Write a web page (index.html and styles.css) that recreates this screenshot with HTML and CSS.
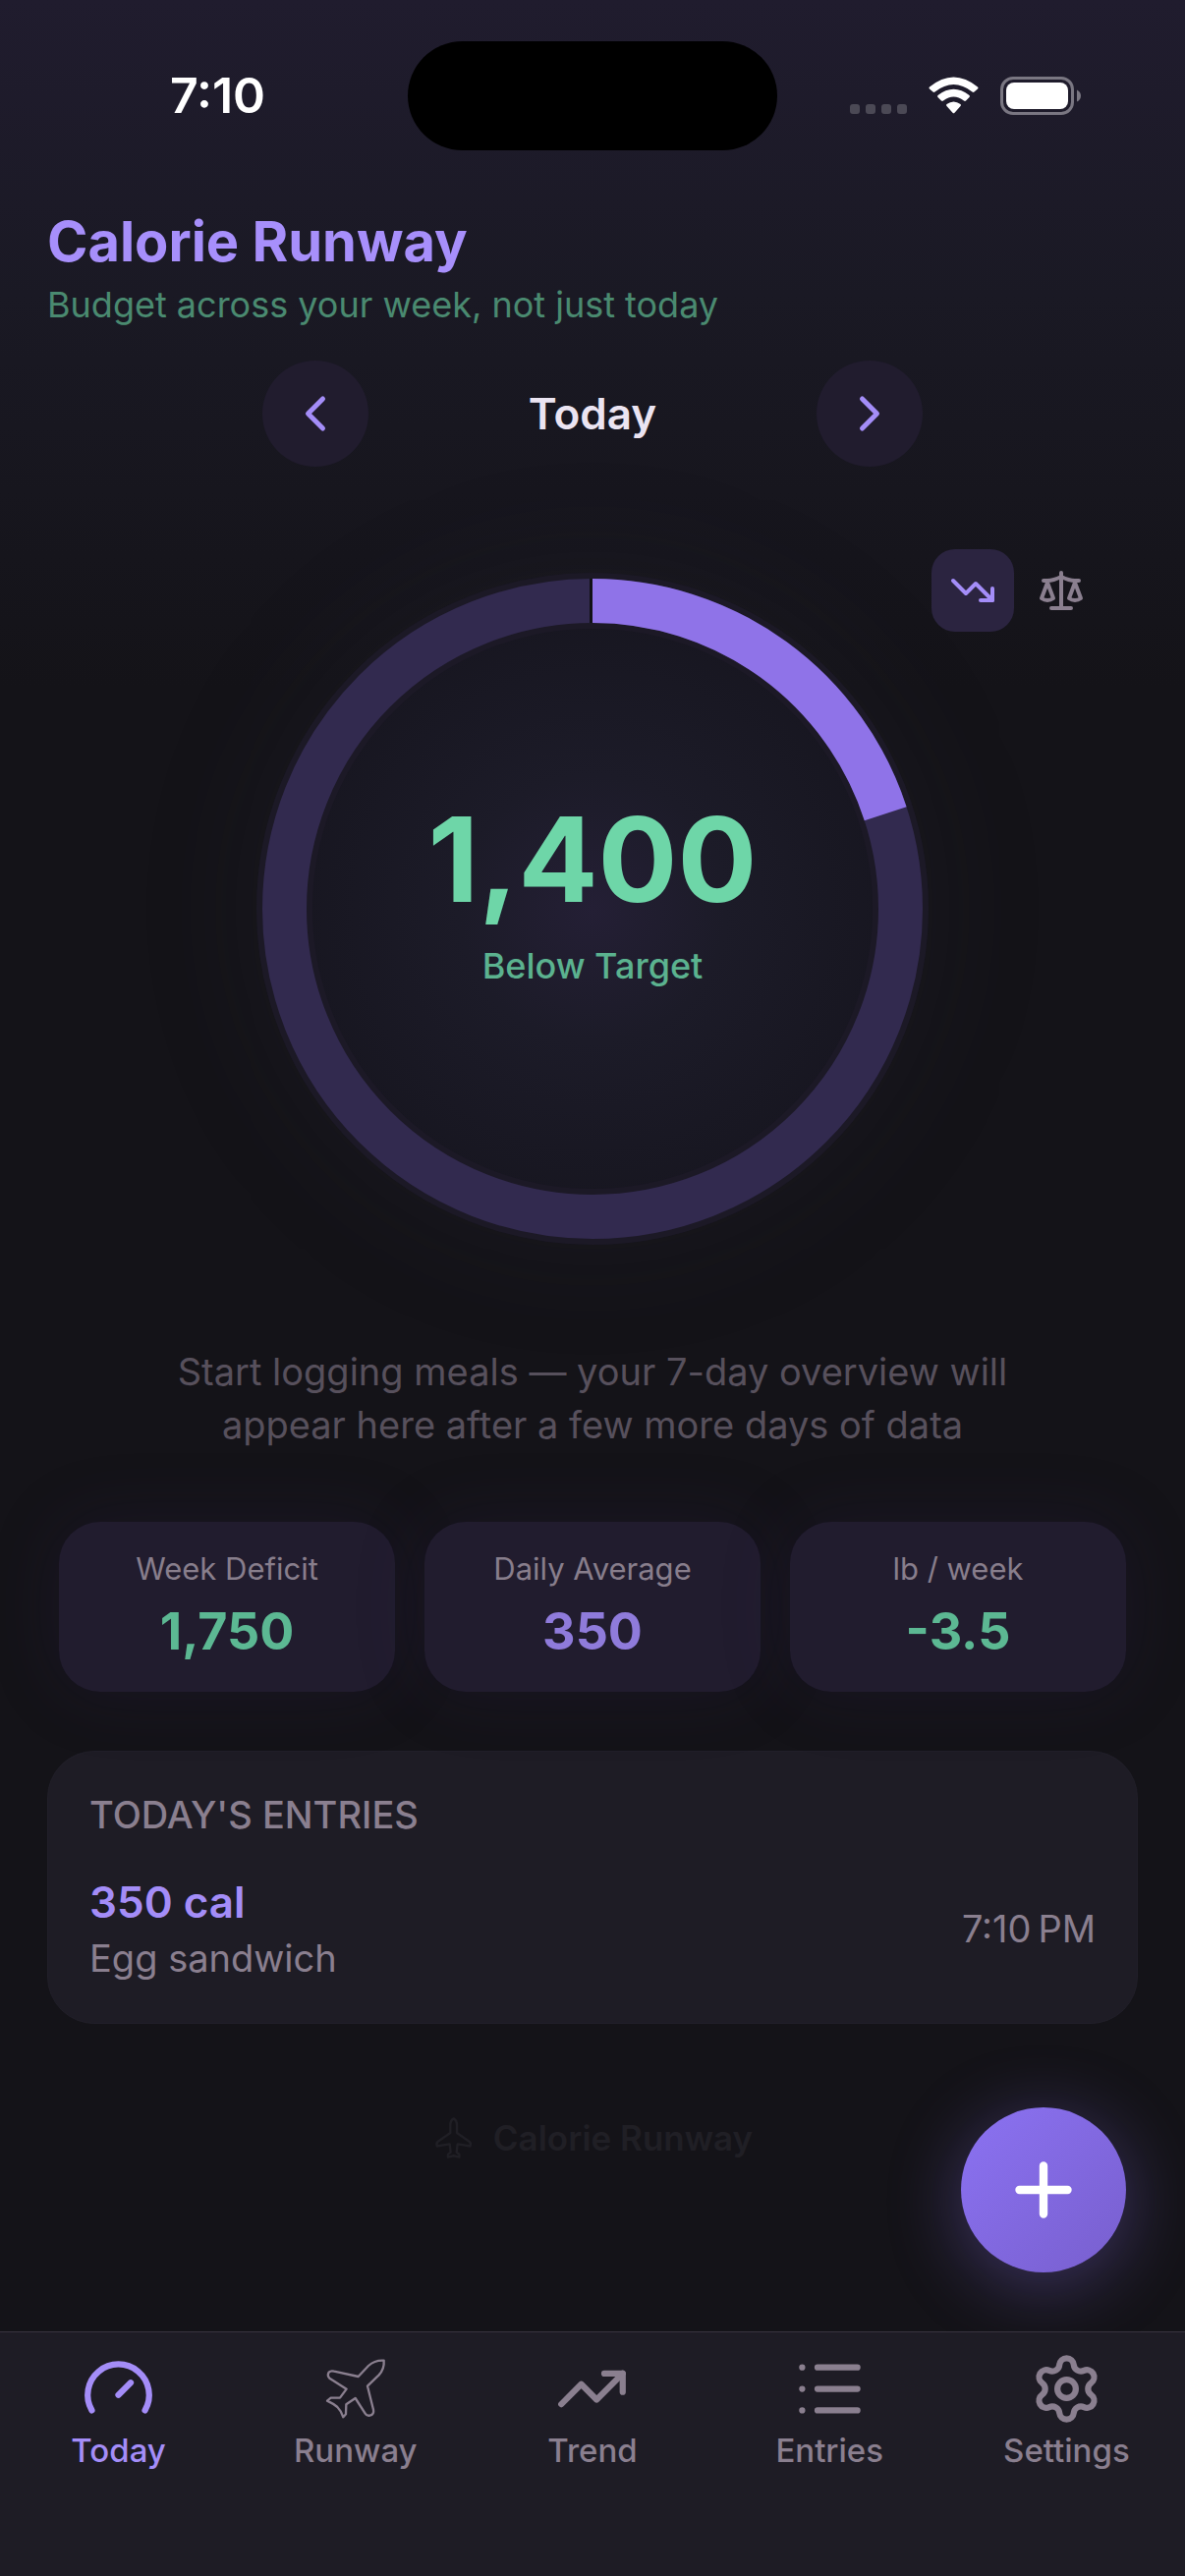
FILE: index.html
```html
<!DOCTYPE html>
<html lang="en">
<head>
    <meta charset="UTF-8">
    <meta name="viewport" content="width=device-width, initial-scale=1.0">
    <title>Calorie Runway</title>
    <link rel="stylesheet" href="styles.css">
</head>
<body>
    <div class="status-bar">
        <div class="status-time">7:10</div>
        <div class="island"></div>
        <div class="status-icons">
            <div class="signal"><span></span><span></span><span></span><span></span></div>
            <svg class="wifi" viewBox="0 0 51 38" fill="#fff">
                <path d="M1 10.500Q0 11.500 1 12.500L4.500 15.500Q5.500 16.300 6.500 15.500Q25.500 0.500 44.500 15.500Q45.500 16.300 46.500 15.500L50 12.500Q51 11.500 50 10.500Q25.500-9.500 1 10.500Z"/>
                <path d="M9.500 19Q8.500 20 9.500 21L13 24.500Q14 25.300 15 24.500Q25.500 16.500 36 24.500Q37 25.300 38 24.500L41.500 21Q42.500 20 41.500 19Q25.500 6.500 9.500 19Z"/>
                <path d="M18.500 28Q17.500 29 18.500 30L24.500 36.800Q25.500 37.800 26.500 36.800L32.500 30Q33.500 29 32.500 28Q25.500 23 18.500 28Z"/>
            </svg>
            <svg class="battery" viewBox="0 0 83 39">
                <rect x="1.500" y="1.500" width="72" height="36" rx="11.500" fill="none" stroke="#7a7782" stroke-width="3"/>
                <rect x="6" y="6" width="63" height="27" rx="8" fill="#fff"/>
                <path d="M78 13.500Q82 15.500 82 19.500T78 25.500Z" fill="#7a7782"/>
            </svg>
        </div>
    </div>

    <main class="main-content">
        <header class="header">
            <h1>Calorie Runway</h1>
            <p class="tagline">Budget across your week, not just today</p>
        </header>

        <div class="day-nav">
            <button class="day-button" type="button" aria-label="Previous day">
                <svg class="icon" viewBox="0 0 24 24"><path d="m15 18-6-6 6-6"/></svg>
            </button>
            <h2>Today</h2>
            <button class="day-button" type="button" aria-label="Next day">
                <svg class="icon" viewBox="0 0 24 24"><path d="m9 18 6-6-6-6"/></svg>
            </button>
        </div>

        <section class="gauge">
            <div class="mode-toggle">
                <button class="mode-button active" type="button" aria-label="Deficit view">
                    <svg class="icon" viewBox="0 0 24 24"><path d="M16 17h6v-6"/><path d="m22 17-8.500-8.500-5 5L2 7"/></svg>
                </button>
                <button class="mode-button" type="button" aria-label="Balance view">
                    <svg class="icon" viewBox="0 0 24 24">
                        <path d="m16 16 3-8 3 8c-.87.65-1.920 1-3 1s-2.130-.35-3-1Z"/>
                        <path d="m2 16 3-8 3 8c-.87.65-1.920 1-3 1s-2.130-.35-3-1Z"/>
                        <path d="M7 21h10M12 3v18M3 7h2c2 0 5-1 7-2 2 1 5 2 7 2h2"/>
                    </svg>
                </button>
            </div>
            <div class="ring">
                <svg class="ring-chart" viewBox="0 0 684 684" fill="none">
                    <circle cx="342" cy="342" r="313.500" stroke="#1c1926" stroke-width="57"/>
                    <circle cx="342" cy="342" r="313.500" stroke="#322a4f" stroke-width="45"/>
                    <!-- 20% of the day's budget -->
                    <circle cx="342" cy="342" r="313.500" stroke="#8f73e8" stroke-width="45" pathLength="100" stroke-dasharray="20 80" transform="rotate(-90 342 342)"/>
                    <path d="M340.500 6v45" stroke="#121117" stroke-width="3"/>
                </svg>
                <div class="ring-label">
                    <div class="ring-value">1,400</div>
                    <div class="ring-caption">Below Target</div>
                </div>
            </div>
        </section>

        <p class="hint">Start logging meals — your 7-day overview will appear here after a few more days of data</p>

        <section class="stats">
            <div class="stat">
                <div class="stat-label">Week Deficit</div>
                <div class="stat-value">1,750</div>
            </div>
            <div class="stat">
                <div class="stat-label">Daily Average</div>
                <div class="stat-value purple">350</div>
            </div>
            <div class="stat">
                <div class="stat-label">lb / week</div>
                <div class="stat-value">-3.5</div>
            </div>
        </section>

        <section class="entries">
            <h3>TODAY'S ENTRIES</h3>
            <div class="entry">
                <div>
                    <div class="entry-calories">350 cal</div>
                    <div class="entry-name">Egg sandwich</div>
                </div>
                <div class="entry-time">7:10&#8239;PM</div>
            </div>
        </section>

        <div class="watermark">
            <svg viewBox="32 34 130 130" fill="none" stroke="currentColor" stroke-width="7" stroke-linejoin="round">
                <path d="M96 41Q86 46 86 62V84L49 110Q43 115 46 124L84 118Q86 132 87 142L79 149V157L96 153L113 157V149L105 142Q106 132 108 118L146 124Q149 115 143 110L106 84V62Q106 46 96 41Z"/>
            </svg>
            <span>Calorie Runway</span>
        </div>
    </main>

    <button class="add-button" type="button" aria-label="Add entry">
        <svg class="icon" viewBox="0 0 24 24"><path d="M5 12h14M12 5v14"/></svg>
    </button>

    <nav class="tab-bar">
        <a class="tab active" href="#today">
            <svg class="icon" viewBox="0 0 24 24"><path d="m12 14 4-4"/><path d="M3.340 19a10 10 0 1 1 17.320 0"/></svg>
            <span>Today</span>
        </a>
        <a class="tab" href="#runway">
            <svg class="icon plane" viewBox="12 12 225 225">
                <path d="M134 87L165 54Q185 36 212 38Q214 64 197 82L162 116L180 188Q183 203 169 206Q160 208 155 200L125 153L97 172L96 202L88 211Q82 192 70 180Q58 170 39 161L50 152H78L98 125L46 92Q38 84 44 74Q50 68 60 71Z"/>
            </svg>
            <span>Runway</span>
        </a>
        <a class="tab" href="#trend">
            <svg class="icon" viewBox="0 0 24 24"><path d="M16 7h6v6"/><path d="m22 7-8.500 8.500-5-5L2 17"/></svg>
            <span>Trend</span>
        </a>
        <a class="tab" href="#entries">
            <svg class="icon" viewBox="0 0 24 24"><path d="M3 5h.01M3 12h.01M3 19h.01M8 5h13M8 12h13M8 19h13"/></svg>
            <span>Entries</span>
        </a>
        <a class="tab" href="#settings">
            <svg class="icon" viewBox="0 0 24 24">
                <path d="M9.671 4.136a2.340 2.340 0 0 1 4.659 0 2.340 2.340 0 0 0 3.319 1.915 2.340 2.340 0 0 1 2.330 4.033 2.340 2.340 0 0 0 0 3.831 2.340 2.340 0 0 1-2.330 4.033 2.340 2.340 0 0 0-3.319 1.915 2.340 2.340 0 0 1-4.659 0 2.340 2.340 0 0 0-3.320-1.915 2.340 2.340 0 0 1-2.330-4.033 2.340 2.340 0 0 0 0-3.831A2.340 2.340 0 0 1 6.350 6.051a2.340 2.340 0 0 0 3.319-1.915"/>
                <circle cx="12" cy="12" r="3"/>
            </svg>
            <span>Settings</span>
        </a>
    </nav>
</body>
</html>
```
FILE: styles.css
```css
* {
    margin: 0;
    padding: 0;
    box-sizing: border-box;
}

body {
    font-family: Inter, 'Liberation Sans', sans-serif;
    background: #141318 linear-gradient(180deg, #201c2e 0, #1a1924 300px, #141318 700px) no-repeat;
    color: #ebe4f2;
    min-height: 100vh;
    display: flex;
    flex-direction: column;
    position: relative;
}

button {
    border: none;
    background: none;
    font: inherit;
    color: inherit;
    display: grid;
    place-items: center;
    cursor: pointer;
}

.icon {
    display: block;
    fill: none;
    stroke: currentColor;
    stroke-width: 2;
    stroke-linecap: round;
    stroke-linejoin: round;
}

/* Status bar */
.status-bar {
    display: grid;
    grid-template-columns: 1fr auto 1fr;
    align-items: center;
    height: 194px;
    color: #fff;
}

.status-time {
    font-size: 50px;
    font-weight: 600;
    text-align: center;
    padding-left: 28px;
}

.island {
    width: 376px;
    height: 111px;
    border-radius: 56px;
    background: #000;
}

.status-icons {
    display: flex;
    align-items: center;
    justify-content: flex-end;
    gap: 22px;
    padding-right: 105px;
}

.signal {
    display: flex;
    gap: 6px;
    padding-top: 28px;
}

.signal span {
    width: 10px;
    height: 10px;
    border-radius: 3px;
    background: #4b4955;
}

.wifi {
    width: 51px;
    height: 38px;
}

.battery {
    width: 83px;
    height: 39px;
}

.main-content {
    flex: 1;
    padding: 16px 48px 48px;
}

.header h1 {
    font-size: 56px;
    line-height: 72px;
    font-weight: 700;
    color: #a78ffb;
}

.tagline {
    margin-top: 4px;
    font-size: 36px;
    line-height: 48px;
    color: #4a8a70;
}

.day-nav {
    display: grid;
    grid-template-columns: 108px 456px 108px;
    justify-content: center;
    align-items: center;
    margin-top: 33px;
    text-align: center;
}

.day-nav h2 {
    font-size: 44px;
    font-weight: 600;
}

.day-button {
    height: 108px;
    border-radius: 50%;
    background: #211c2e;
    color: #a48df8;
}

.day-button .icon {
    width: 60px;
    height: 60px;
}

/* Ring gauge */
.gauge {
    position: relative;
    margin-top: 60px;
    padding: 48px 0;
}

.mode-toggle {
    position: absolute;
    z-index: 1;
    top: 24px;
    right: 36px;
    display: flex;
    gap: 6px;
}

.mode-button {
    width: 84px;
    height: 84px;
    border-radius: 24px;
    color: #8a7f8f;
}

.mode-button.active {
    background: #2b2440;
    color: #a48df8;
}

.mode-button .icon {
    width: 48px;
    height: 48px;
}

.ring {
    display: grid;
    place-items: center;
    width: 684px;
    margin: 0 auto;
    border-radius: 50%;
    background: radial-gradient(circle, #241f35 0, #1c1b28 28%, #171620 64%);
    box-shadow: 0 0 120px rgba(44, 44, 60, 0.2);
}

.ring-chart,
.ring-label {
    grid-area: 1 / 1;
}

.ring-chart {
    display: block;
    width: 100%;
}

.ring-label {
    padding-bottom: 40px;
    text-align: center;
}

.ring-value {
    font-size: 120px;
    line-height: 144px;
    font-weight: 700;
    color: #6ed6a8;
}

.ring-caption {
    font-size: 36px;
    line-height: 48px;
    margin-top: 12px;
    font-weight: 500;
    color: #5bb28f;
}

.hint {
    max-width: 900px;
    margin: 54px auto 0;
    font-size: 38px;
    line-height: 54px;
    text-align: center;
    color: #57505c;
}

/* Weekly stats */
.stats {
    display: grid;
    grid-template-columns: repeat(3, 1fr);
    gap: 30px;
    margin: 72px 12px 0;
}

.stat {
    padding: 30px 12px;
    border-radius: 42px;
    background: #211c2e;
    box-shadow: 0 0 72px rgba(48, 36, 84, 0.2);
    text-align: center;
}

.stat-label {
    font-size: 31px;
    line-height: 36px;
    color: #887e8c;
}

.stat-value {
    margin-top: 14px;
    font-size: 52px;
    line-height: 63px;
    font-weight: 700;
    color: #5cb893;
}

.stat-value.purple {
    color: #8f7bdb;
}

.entries {
    margin-top: 60px;
    padding: 42px;
    border: 1px solid #211f29;
    border-radius: 48px;
    background: #1e1c25;
}

.entries h3 {
    font-size: 38px;
    line-height: 44px;
    font-weight: 500;
    color: #8a7f8f;
}

.entry {
    display: flex;
    align-items: center;
    justify-content: space-between;
    margin-top: 40px;
}

.entry-calories {
    font-size: 44px;
    line-height: 54px;
    font-weight: 600;
    color: #a48df8;
}

.entry-name {
    margin-top: 6px;
    font-size: 38px;
    line-height: 48px;
    color: #8a7f8f;
}

.entry-time {
    font-size: 38px;
    color: #8a7f8f;
}

.watermark {
    display: flex;
    align-items: center;
    justify-content: center;
    gap: 18px;
    margin-top: 94px;
    font-size: 35px;
    line-height: 44px;
    font-weight: 600;
    color: #201f25;
}

.watermark svg {
    width: 44px;
    height: 44px;
}

.add-button {
    position: absolute;
    right: 60px;
    bottom: 309px;
    width: 168px;
    height: 168px;
    border-radius: 50%;
    background: linear-gradient(135deg, #8b72f2, #785fce);
    box-shadow: 0 12px 72px rgba(139, 114, 242, 0.35);
    color: #fff;
}

.add-button .icon {
    width: 84px;
    height: 84px;
    stroke-width: 2.4;
}

/* Tab bar */
.tab-bar {
    position: relative;
    display: grid;
    grid-template-columns: repeat(5, 1fr);
    padding: 20px 0 107px;
    border-top: 1px solid #38343f;
    background: #1e1c25;
}

.tab {
    display: flex;
    flex-direction: column;
    align-items: center;
    gap: 4px;
    font-size: 33px;
    line-height: 42px;
    font-weight: 500;
    color: #8a7f8f;
    text-decoration: none;
}

.tab.active {
    color: #a48df8;
}

.tab .icon {
    width: 75px;
    height: 75px;
}

.tab .plane {
    stroke-width: 7;
}
```
